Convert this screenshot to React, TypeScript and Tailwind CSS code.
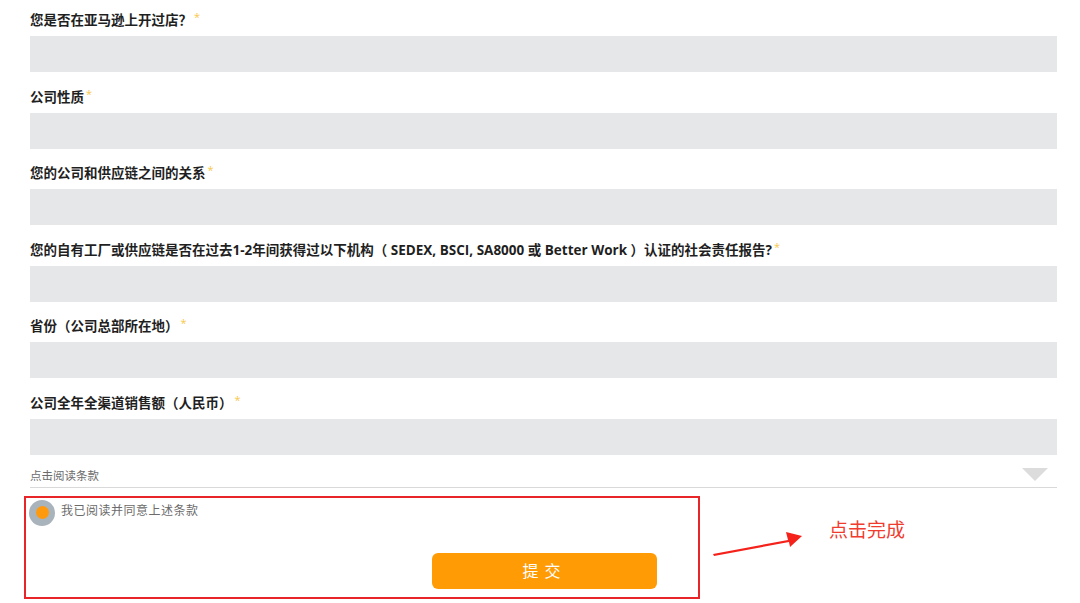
const fields = [
  "您是否在亚马逊上开过店？",
  "公司性质",
  "您的公司和供应链之间的关系",
  "您的自有工厂或供应链是否在过去1-2年间获得过以下机构（ SEDEX, BSCI, SA8000 或 Better Work ）认证的社会责任报告?",
  "省份（公司总部所在地）",
  "公司全年全渠道销售额（人民币）",
];

function Field(props: { label: string }) {
  return (
    <div className="mb-[16.5px]">
      <div className="mb-[8px] h-[16px] overflow-visible whitespace-nowrap text-[13.5px] leading-[16px] font-bold text-[#1f1f1f] [text-spacing-trim:space-all]">
        {props.label}
        <span className="relative -top-[4px] ml-[2px] text-[11px] font-normal text-[#f7c84a]">*</span>
      </div>
      <div className="h-[36px] w-full bg-[#e6e7e8]" />
    </div>
  );
}

export default function App() {
  return (
    <div
      className="h-[603px] w-[1080px] overflow-hidden bg-white pt-[12px]"
      style={{ fontFamily: '"Open Sans", "Noto Sans CJK SC", sans-serif' }}
    >
      <div className="ml-[30px] w-[1027px]">
        {fields.map((f) => (
          <Field key={f} label={f} />
        ))}

        <div className="relative -mt-[16.5px] flex h-[33px] items-end border-b border-[#d9d9d9] pb-[3px]">
          <span className="text-[11.5px] leading-[16px] text-[#6b6b6b]">点击阅读条款</span>
          <div className="absolute right-[9px] top-[13px] h-0 w-0 border-x-[13px] border-t-[13px] border-x-transparent border-t-[#dcdcdc]" />
        </div>

        <div className="mt-[8px] flex">
          <div className="-ml-[6px] h-[103px] w-[676px] border-2 border-[#e8262a] pl-[3px] pt-[2px]">
            <div className="flex h-[26px] items-center gap-[6px]">
              <div className="flex h-[26px] w-[26px] items-center justify-center rounded-full bg-[#a9b3bc]">
                <div className="h-[13px] w-[13px] rounded-full bg-[#ff9a0f]" />
              </div>
              <span className="-mt-[3px] text-[12px] leading-[16px] tracking-[0.5px] text-[#6b6b6b]">我已阅读并同意上述条款</span>
            </div>
            <button className="ml-[403px] mt-[27px] flex h-[36px] w-[225px] items-center justify-center rounded-[6px] bg-[#ff9b05] text-[16px] tracking-[6px] text-white">
              提交
            </button>
          </div>

          <div className="flex items-start">
            <svg width="100" height="40" viewBox="0 0 100 40" className="ml-[9px] mt-[30px]">
              <path d="M4 28 L79 14 L77 6 L93 10 L81 21 L80 16 L5 30 Z" fill="#f4221b" />
            </svg>
            <span className="ml-[20px] mt-[22px] text-[19px] leading-[24px] text-[#f03b2f]">点击完成</span>
          </div>
        </div>
      </div>
    </div>
  );
}
